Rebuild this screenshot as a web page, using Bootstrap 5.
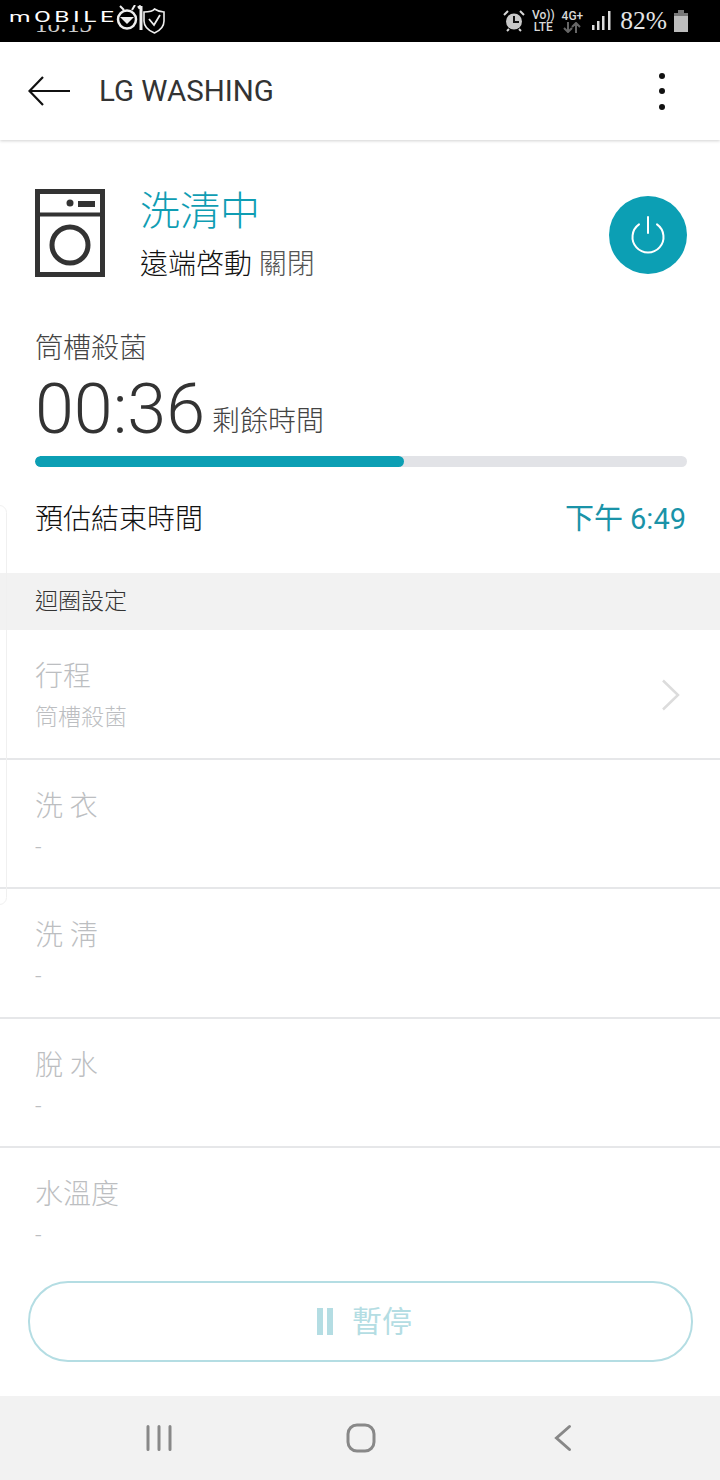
<!DOCTYPE html>
<html lang="zh-Hant">
<head>
    <meta charset="UTF-8">
    <meta name="viewport" content="width=device-width, initial-scale=1.0">
    <title>LG WASHING</title>
    <link href="https://cdn.jsdelivr.net/npm/bootstrap@5.3.3/dist/css/bootstrap.min.css" rel="stylesheet">
    <style>
        html, body {
            height: 1480px;
            overflow: hidden;
        }
        body {
            font-family: Roboto, "Noto Sans CJK TC", sans-serif;
            background: #fff;
            color: #333;
        }
        .status-bar {
            height: 42px;
            background: #000;
            color: #d8d8d8;
        }
        .status-left {
            position: relative;
            width: 170px;
            height: 42px;
        }
        .clock {
            position: absolute;
            left: 35px;
            top: 9px;
            font: 25px/30px "Liberation Serif", serif;
            color: #ccc;
        }
        /* watermark sits on top of the clock and hides its upper half */
        .site-mark {
            position: absolute;
            left: 9px;
            top: 10px;
            width: 62px;
            height: 15px;
            background: #000;
            font: 400 14px/15px Roboto, sans-serif;
            letter-spacing: 2px;
            color: #fff;
            white-space: nowrap;
            transform-origin: left center;
            transform: scaleX(1.75);
        }
        .site-badge {
            position: absolute;
            left: 112px;
            top: 5px;
        }
        .lte {
            font: 500 12px/12px Roboto, sans-serif;
            text-align: center;
        }
        .battery-text {
            font: 25.5px/30px "Liberation Serif", serif;
            color: #e4e4e4;
            margin-left: 2px;
        }
        .sig-icon {
            margin-left: 2px;
        }
        .status-right {
            margin-right: 32px;
            gap: 7px;
        }
        .top-bar {
            height: 98px;
            padding: 0 28px;
            box-shadow: 0 1px 3px rgba(0, 0, 0, .18);
        }
        .top-title {
            font-size: 29.5px;
            line-height: 34px;
            margin-left: 27px;
        }
        .kebab i {
            display: block;
            width: 6px;
            height: 6px;
            border-radius: 50%;
            background: #111;
        }
        .kebab {
            gap: 9.5px;
            margin-right: 27px;
        }
        .summary {
            padding: 43px 33px 0 35px;
        }
        .summary-text {
            margin-left: 35px;
            padding-top: 4px;
        }
        .state-text {
            font-size: 40px;
            line-height: 50px;
            font-weight: 300;
            color: #0f9db3;
            margin-bottom: 10px;
        }
        .remote-text {
            font-size: 28px;
            line-height: 36px;
            font-weight: 300;
            color: #111;
        }
        .remote-off {
            color: #555;
        }
        .power-btn {
            width: 78px;
            height: 78px;
            margin-top: 4px;
            border-radius: 50%;
            background: #0c9fb4;
            border: 0;
        }
        .timer-box {
            padding: 0 33px 0 35px;
        }
        .course-name {
            font-size: 28px;
            line-height: 36px;
            font-weight: 300;
            color: #444;
            margin-top: 48px;
        }
        .time-left {
            font-size: 70px;
            line-height: 84px;
            font-weight: 300;
            color: #333;
        }
        .time-label {
            font-size: 28px;
            line-height: 36px;
            font-weight: 300;
            color: #444;
            margin-left: 7px;
            margin-bottom: 11px;
        }
        .wash-progress {
            height: 11px;
            border-radius: 6px;
            background: #e2e3e7;
            margin-top: 5px;
        }
        .wash-progress .progress-bar {
            background: #0c9fb4;
            border-radius: 6px;
        }
        .end-row {
            height: 66px;
            margin-top: 20px;
            margin-bottom: 20px;
            padding-right: 1px;
            font-size: 28px;
            font-weight: 300;
            color: #111;
        }
        .end-time {
            font-size: 29px;
            font-weight: 400;
            color: #1a93a8;
        }
        .section-head {
            height: 57px;
            background: #f2f2f2;
            padding: 2px 0 0 35px;
            font-size: 23px;
            font-weight: 300;
            color: #333;
        }
        .opt-row {
            height: 129.5px;
            padding: 29px 35px 0;
            border-bottom: 2px solid #e6e7e9;
            color: #bcbec1;
            font-weight: 300;
        }
        .opt-row.last-row {
            border-bottom: 0;
        }
        .opt-title {
            font-size: 28px;
            line-height: 36px;
        }
        .opt-value {
            font-size: 23px;
            line-height: 30px;
            margin-top: 8px;
        }
        .opt-arrow {
            margin-top: 20px;
            margin-right: 4px;
        }
        .pause-wrap {
            position: absolute;
            left: 28px;
            right: 27px;
            top: 1281px;
        }
        .pause-btn {
            height: 81px;
            padding-left: 20px;
            border: 2px solid #b4dde3;
            border-radius: 40px;
            background: #fff;
            color: #b4dde3;
            font-size: 30px;
            gap: 19px;
        }
        .pause-bars {
            gap: 4px;
        }
        .pause-bars i {
            display: block;
            width: 6px;
            height: 27px;
            background: #b4dde3;
        }
        .nav-strip {
            position: absolute;
            left: 0;
            right: 0;
            bottom: 0;
            height: 84px;
            background: #f2f2f2;
            padding-left: 2px;
            gap: 172px;
        }
        .edge-panel {
            position: absolute;
            left: -8px;
            top: 505px;
            width: 15px;
            height: 400px;
            border: 1px solid #f0f0f0;
            border-radius: 8px;
        }
    </style>
</head>
<body>

    <!-- status bar -->
    <div class="status-bar d-flex justify-content-between align-items-center">
        <div class="status-left">
            <span class="clock">18:13</span>
            <span class="site-mark">mOBILE</span>
            <svg class="site-badge" width="54" height="30" viewBox="0 0 54 30" fill="none" stroke="#eee">
                <circle cx="15" cy="14.500" r="9" stroke-width="2.500"/>
                <path d="M8 12h14l-7 7z" fill="#eee" stroke="none"/>
                <path d="M8 1l4 4M23 0l-3 5" stroke-width="2"/>
                <path d="M29 1l-3 2M29 1v24" stroke-width="3"/>
                <path d="M32 7c5 0 9-1 10.500-3 3 2 6 3 9.500 3v9c0 6-5 10-9.500 12-5-2-10.500-6-10.500-12z" stroke-width="1.600"/>
                <path d="M37 14l5 6 6-10" stroke-width="1.800"/>
            </svg>
        </div>
        <div class="status-right d-flex align-items-center">
            <svg width="22" height="24" viewBox="0 0 22 24">
                <circle cx="11" cy="12.500" r="8" fill="#c8c8c8"/>
                <path d="M11 7v6h5" fill="none" stroke="#111" stroke-width="2"/>
                <path d="M1 6l4-4M21 6l-4-4M4 22l2-2M18 22l-2-2" stroke="#d8d8d8" stroke-width="2"/>
            </svg>
            <div class="lte">Vo))<br>LTE</div>
            <div class="lte d-flex flex-column align-items-center">4G+
                <svg width="18" height="11" viewBox="0 0 18 11" fill="none" stroke="#666" stroke-width="2">
                    <path d="M5 0v10M1 6l4 4 4-4M13 11V1M9 5l4-4 4 4"/>
                </svg>
            </div>
            <svg class="sig-icon" width="19" height="22" viewBox="0 0 19 22" fill="#ddd">
                <rect x="0" y="15" width="2.500" height="5"/>
                <rect x="5" y="11" width="2.500" height="9"/>
                <rect x="10" y="6" width="2.500" height="14"/>
                <rect x="16" y="1" width="2.500" height="19"/>
            </svg>
            <span class="battery-text">82%</span>
            <svg width="14" height="22" viewBox="0 0 14 22" fill="#bcbcbc">
                <rect x="4" y="0" width="6" height="3" fill="#777"/>
                <rect x="0" y="3" width="14" height="3" fill="#777"/>
                <rect x="0" y="6" width="14" height="16"/>
            </svg>
        </div>
    </div>

    <!-- title bar -->
    <div class="top-bar d-flex align-items-center">
        <svg width="44" height="32" viewBox="0 0 44 32" fill="none" stroke="#111" stroke-width="2.200">
            <path d="M42 16H1.500M15 2L1.500 16 15 30"/>
        </svg>
        <div class="top-title flex-grow-1">LG WASHING</div>
        <div class="kebab d-flex flex-column">
            <i></i><i></i><i></i>
        </div>
    </div>

    <!-- machine state -->
    <div class="summary d-flex align-items-center">
        <svg width="70" height="88" viewBox="0 0 70 88" fill="none" stroke="#333" stroke-width="5">
            <rect x="2.500" y="2.500" width="65" height="83"/>
            <path d="M2 25.500h66" stroke-width="4"/>
            <circle cx="35" cy="56" r="18"/>
            <circle cx="35" cy="14" r="3.500" fill="#333" stroke="none"/>
            <rect x="43" y="12" width="17" height="6" fill="#333" stroke="none"/>
        </svg>
        <div class="summary-text flex-grow-1">
            <div class="state-text">洗清中</div>
            <div class="remote-text">遠端啓動 <span class="remote-off">關閉</span></div>
        </div>
        <button class="power-btn d-flex align-items-center justify-content-center" type="button" aria-label="power">
            <svg width="36" height="38" viewBox="0 0 36 38" fill="none" stroke="#fff" stroke-width="2" stroke-linecap="round">
                <path d="M18 1v16"/>
                <path d="M9 8.400A15.500 15.500 0 1 0 27 8.400"/>
            </svg>
        </button>
    </div>

    <!-- remaining time -->
    <div class="timer-box">
        <div class="course-name">筒槽殺菌</div>
        <div class="d-flex align-items-end">
            <span class="time-left">00:36</span>
            <span class="time-label">剩餘時間</span>
        </div>
        <div class="progress wash-progress">
            <div class="progress-bar" style="width: 56.6%"></div>
        </div>
        <div class="end-row d-flex justify-content-between align-items-center">
            <span>預估結束時間</span>
            <span class="end-time">下午 6:49</span>
        </div>
    </div>

    <!-- cycle settings -->
    <div class="section-head d-flex align-items-center">迴圈設定</div>
    <div class="opt-row d-flex justify-content-between">
        <div>
            <div class="opt-title">行程</div>
            <div class="opt-value">筒槽殺菌</div>
        </div>
        <svg class="opt-arrow" width="20" height="32" viewBox="0 0 20 32" fill="none" stroke="#dcdcdc" stroke-width="2.500">
            <path d="M2 1.500L17 16 2 30.500"/>
        </svg>
    </div>
    <div class="opt-row">
        <div class="opt-title">洗 衣</div>
        <div class="opt-value">-</div>
    </div>
    <div class="opt-row">
        <div class="opt-title">洗 淸</div>
        <div class="opt-value">-</div>
    </div>
    <div class="opt-row">
        <div class="opt-title">脫 水</div>
        <div class="opt-value">-</div>
    </div>
    <div class="opt-row last-row">
        <div class="opt-title">水溫度</div>
        <div class="opt-value">-</div>
    </div>

    <div class="edge-panel"></div>

    <!-- pause button -->
    <div class="pause-wrap">
        <button class="btn pause-btn w-100 d-flex align-items-center justify-content-center" type="button">
            <span class="pause-bars d-flex"><i></i><i></i></span>
            <span>暫停</span>
        </button>
    </div>

    <!-- system navigation -->
    <div class="nav-strip d-flex align-items-center justify-content-center">
        <svg width="30" height="30" viewBox="0 0 30 30" stroke="#888" stroke-width="3" stroke-linecap="round">
            <path d="M4 3.500v23M15 3.500v23M26 3.500v23"/>
        </svg>
        <svg width="30" height="30" viewBox="0 0 30 30" fill="none" stroke="#888" stroke-width="3">
            <rect x="2" y="2" width="26" height="26" rx="9"/>
        </svg>
        <svg width="30" height="30" viewBox="0 0 30 30" fill="none" stroke="#888" stroke-width="3" stroke-linecap="round">
            <path d="M21.500 3.500L8.500 15l13 11.500"/>
        </svg>
    </div>

</body>
</html>
